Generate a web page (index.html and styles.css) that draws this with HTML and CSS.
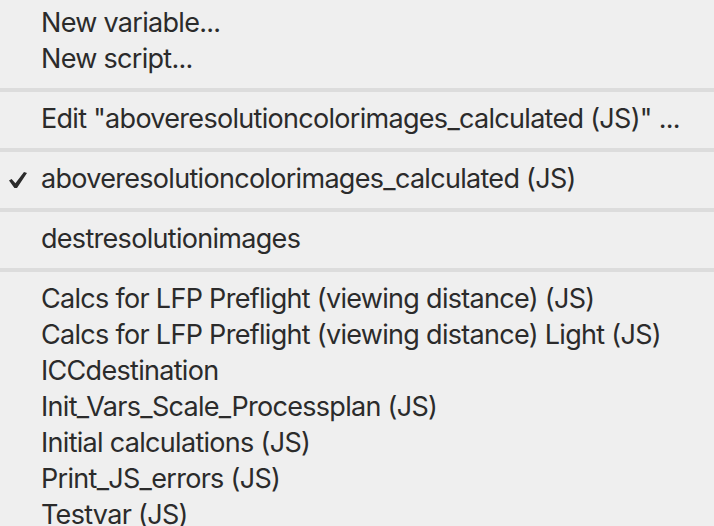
FILE: index.html
```html
<!DOCTYPE html>
<html>
<head>
<meta charset="utf-8">
<link rel="stylesheet" href="styles.css">
</head>
<body>
<div class="menu">
  <div class="section first">
    <div class="item"><span class="label">New variable...</span></div>
    <div class="item"><span class="label">New script...</span></div>
  </div>
  <div class="sep"></div>
  <div class="section">
    <div class="item"><span class="label">Edit "aboveresolutioncolorimages_calculated (JS)" ...</span></div>
  </div>
  <div class="sep"></div>
  <div class="section">
    <div class="item checked">
      <svg class="check" width="18" height="16" viewBox="0 0 18 16"><path d="M0 8.6 L2.6 7.0 L6.4 11.2 L15.0 0 L18 1.0 L8.0 16 L5.4 16 Z" fill="#2b2b2b"/></svg>
      <span class="label">aboveresolutioncolorimages_calculated (JS)</span>
    </div>
  </div>
  <div class="sep"></div>
  <div class="section">
    <div class="item"><span class="label">destresolutionimages</span></div>
  </div>
  <div class="sep"></div>
  <div class="section">
    <div class="item"><span class="label">Calcs for LFP Preflight (viewing distance) (JS)</span></div>
    <div class="item"><span class="label">Calcs for LFP Preflight (viewing distance) Light (JS)</span></div>
    <div class="item"><span class="label">ICCdestination</span></div>
    <div class="item"><span class="label">Init_Vars_Scale_Processplan (JS)</span></div>
    <div class="item"><span class="label">Initial calculations (JS)</span></div>
    <div class="item"><span class="label">Print_JS_errors (JS)</span></div>
    <div class="item"><span class="label">Testvar (JS)</span></div>
  </div>
</div>
</body>
</html>
```

FILE: styles.css
```css
html, body {
  margin: 0;
  padding: 0;
  background: #efefef;
  overflow: hidden;
}
.menu {
  width: 714px;
  height: 526px;
  overflow: hidden;
  background: #efefef;
  font-family: Inter, "Open Sans", sans-serif;
  font-size: 27px;
  letter-spacing: -0.7px;
  color: #2b2b2b;
}
.section {
  padding: 9px 0 11px 0;
}
.section.first {
  padding-top: 5px;
}
.sep {
  height: 4px;
  background: #dcdcdc;
}
.item {
  height: 36px;
  line-height: 36px;
  padding-left: 41px;
  position: relative;
  white-space: nowrap;
}
.check {
  position: absolute;
  left: 9px;
  top: 11px;
}
```
